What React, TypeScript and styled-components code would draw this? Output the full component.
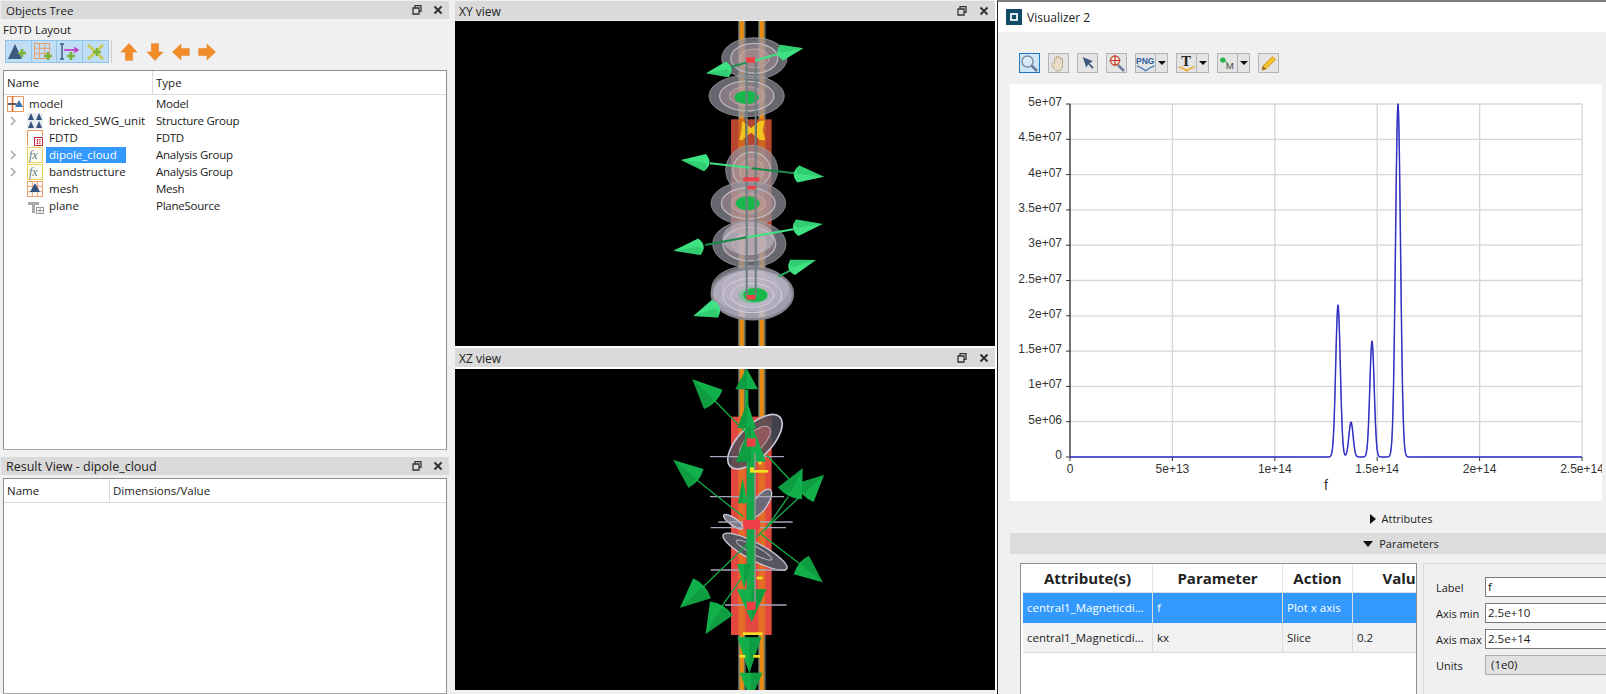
import React from "react";
import styled, { createGlobalStyle } from "styled-components";

const Global = createGlobalStyle`
  html, body { margin: 0; padding: 0; background: #f0f0f0; overflow: hidden; }
  * { box-sizing: border-box; }
`;

const FONT = `"Open Sans", "Noto Sans", sans-serif`;

const Page = styled.div`
  width: 1606px; height: 694px; overflow: hidden; display: flex;
  background: #f0f0f0; font-family: ${FONT}; font-size: 11.5px; color: #1a1a1a;
`;
const LeftColumn = styled.div`
  width: 449px; margin-right: 6px; height: 694px; display: flex; flex-direction: column; flex: none;
`;
const ViewsColumn = styled.div`
  width: 540px; height: 694px; display: flex; flex-direction: column; flex: none;
`;
const TitleBar = styled.div<{ $inset?: boolean; $fs?: number }>`
  height: 18px; margin-top: 1px; flex: none; background: #dadada; display: flex; align-items: center;
  padding: 0 0 0 ${(p) => (p.$inset ? 4 : 5)}px; font-size: ${(p) => p.$fs ?? 12}px; color: #222;
  border-left: ${(p) => (p.$inset ? "0" : "1px solid #ececec")};
`;
const TitleText = styled.span` flex: 1; white-space: nowrap; `;
const TitleButton = styled.span<{ $w: number }>`
  width: ${(p) => p.$w}px; height: 18px; display: flex; align-items: center; justify-content: center; flex: none;
`;
const LayoutLabel = styled.div` height: 21px; padding: 1px 0 0 3px; line-height: 20px; font-size: 11.5px; flex: none; `;
const ToolRow = styled.div` display: flex; align-items: center; height: 23px; padding-left: 5px; flex: none; `;
const ToolGroup = styled.div`
  display: flex; width: 104px; height: 23px; background: #bfddf5; border: 1px solid #92c3ea;
`;
const ToolGroupButton = styled.div`
  width: 26px; display: flex; align-items: center; justify-content: center; border-right: 1px solid #92c3ea;
  &:last-child { border-right: 0; }
`;
const ToolSep = styled.div` width: 1px; height: 23px; background: #cfcfcf; margin: 0 8px 0 2px; `;
const MoveButton = styled.div` width: 26px; display: flex; justify-content: flex-start; `;
const TableBox = styled.div<{ $h?: number; $top: number }>`
  margin: ${(p) => p.$top}px 2px 0 3px; ${(p) => (p.$h ? `height: ${p.$h}px; flex: none;` : "flex: 1;")}
  border: 1px solid #8f8f8f; border-bottom-color: #a8a8a8; background: #fff; overflow: hidden;
`;
const HeadRow = styled.div<{ $first: number }>`
  display: grid; grid-template-columns: ${(p) => p.$first}px 1fr; height: 24px;
  border-bottom: 1px solid #d8d8d8; background: #fff;
`;
const HeadCell = styled.div`
  padding-left: 3px; line-height: 23px; border-right: 1px solid #d8d8d8; font-size: 11.5px;
  &:last-child { border-right: 0; }
`;
const TreeBody = styled.div` padding-top: 0; `;
const TreeRow = styled.div`
  display: grid; grid-template-columns: 148px 1fr; height: 17px; line-height: 17px; font-size: 11.5px;
`;
const NameCell = styled.div<{ $depth: number }>`
  display: flex; align-items: center; padding-left: ${(p) => (p.$depth ? 6 : 3)}px; white-space: nowrap;
`;
const Chevron = styled.span` width: 17px; flex: none; display: flex; align-items: center; `;
const TreeIcon = styled.span` width: 17px; height: 17px; flex: none; margin-right: 5px; display: flex; align-items: center; `;
const TreeLabel = styled.span<{ $sel?: boolean }>`
  margin-left: -3px; padding: 0 3px; height: 16px; line-height: 16px;
  ${(p) => (p.$sel ? "background: #3399ff; color: #fff; width: 80px;" : "")}
`;
const TypeCell = styled.div` padding-left: 4px; letter-spacing: -0.25px; `;
const ViewPort = styled.svg<{ $h: number }>`
  display: block; width: 540px; height: ${(p) => p.$h}px; background: #000; flex: none;
`;
const ViewSpacer = styled.div<{ $h: number; $c?: string }>` height: ${(p) => p.$h}px; flex: none; background: ${(p) => p.$c || "#f0f0f0"}; `;
const ViewsTitle = styled(TitleBar)` margin-top: 0; height: 19px; padding-top: 1px; `;
const Win = styled.div`
  flex: none; width: 609px; height: 694px; margin-left: 2px; border-left: 1px solid #222; border-top: 2px solid #7d7d7d;
  box-shadow: -2px 0 0 #fff; display: flex; flex-direction: column; overflow: hidden; background: #f0f0f0;
`;
const WinTitle = styled.div`
  height: 30px; background: #fff; display: flex; align-items: center; padding-left: 8px; gap: 5px; font-size: 12px; flex: none;
`;
const WinToolbar = styled.div` height: 52px; padding: 21px 0 0 21px; display: flex; gap: 8px; flex: none; `;
const ToolBtn = styled.div<{ $active?: boolean; $w?: number }>`
  width: ${(p) => p.$w ?? 21}px; height: 20px; display: flex; align-items: center; flex: none;
  justify-content: ${(p) => (p.$w ? "flex-start" : "center")};
  background: ${(p) => (p.$active ? "#cfe6f8" : "#e4e4e4")};
  border: 1px solid ${(p) => (p.$active ? "#1e78c4" : "#b4b4b4")};
`;
const Caret = styled.span`
  margin-left: auto; width: 12px; height: 18px; border-left: 1px solid #b4b4b4; display: flex; align-items: center; justify-content: center;
  &::after { content: ""; border-left: 4px solid transparent; border-right: 4px solid transparent; border-top: 4px solid #111; }
`;
const PlotCard = styled.svg`
  display: block; flex: none; margin-left: 12px; width: 592px; height: 417px; background: #fff;
  font-family: "Liberation Sans", sans-serif;
`;
const Section = styled.div<{ $open?: boolean }>`
  flex: none; margin-left: 12px; width: 782px; display: flex; justify-content: center; align-items: center; gap: 6px;
  font-size: 11px; color: #222; height: ${(p) => (p.$open ? 21 : 32)}px;
  ${(p) => (p.$open ? "background: #dcdcdc;" : "padding: 3px 0 0 0;")}
`;
const Triangle = styled.span<{ $open?: boolean }>`
  width: 0; height: 0;
  ${(p) => p.$open
    ? "border-left: 5px solid transparent; border-right: 5px solid transparent; border-top: 6px solid #111;"
    : "border-top: 5px solid transparent; border-bottom: 5px solid transparent; border-left: 6px solid #111;"}
`;
const ParamArea = styled.div` flex: 1; display: flex; padding: 9px 0 0 22px; gap: 6px; min-height: 0; `;
const ParamTable = styled.div`
  width: 397px; flex: none; background: #fff; border: 1px solid #8f8f8f; border-bottom: 0; padding-left: 2px; overflow: hidden;
`;
const GridRow = styled.div<{ $sel?: boolean; $head?: boolean }>`
  display: grid; grid-template-columns: 130px 130px 70px 102px; width: 432px;
  height: ${(p) => (p.$head ? 29 : 30)}px;
  background: ${(p) => (p.$sel ? "#3399ff" : p.$head ? "#fff" : "#f2f2f2")};
  color: ${(p) => (p.$sel ? "#fff" : "#222")};
  border-bottom: ${(p) => (p.$sel ? "0" : "1px solid #dcdcdc")};
`;
const GridCell = styled.div<{ $head?: boolean }>`
  border-right: 1px solid ${(p) => (p.$head ? "#e4e4e4" : "#dcdcdc")};
  padding-left: ${(p) => (p.$head ? 0 : 4)}px; white-space: nowrap; overflow: hidden;
  line-height: ${(p) => (p.$head ? 28 : 29)}px;
  text-align: ${(p) => (p.$head ? "center" : "left")};
  font-size: ${(p) => (p.$head ? 15 : 11.5)}px; font-weight: ${(p) => (p.$head ? 700 : 400)};
`;
const FormPanel = styled.div`
  flex: 1; border: 1px solid #dcdcdc; border-bottom: 0; border-right: 0; padding: 13px 0 0 12px;
  display: flex; flex-direction: column; gap: 6px;
`;
const FormRow = styled.div` display: flex; align-items: center; height: 20px; `;
const FormLabel = styled.span` width: 49px; flex: none; font-size: 11px; `;
const FormInput = styled.div<{ $grey?: boolean }>`
  flex: 1; height: 20px; line-height: 18px; padding-left: ${(p) => (p.$grey ? 5 : 2)}px; font-size: 11.5px;
  border: 1px solid ${(p) => (p.$grey ? "#adadad" : "#7a7a7a")}; border-right: 0;
  background: ${(p) => (p.$grey ? "#e1e1e1" : "#fff")};
`;

/* ---------- small icons ---------- */
const FloatIcon = () => (
  <svg width="10" height="10" viewBox="0 0 10 10"><path d="M3 2.5V.7h6v5.6H7M1 3h6v6H1z" fill="none" stroke="#333" strokeWidth="1.3" /></svg>
);
const CloseIcon = () => (
  <svg width="10" height="10" viewBox="0 0 10 10"><path d="M1.5 1.5l7 7M8.5 1.5l-7 7" stroke="#333" strokeWidth="2" /></svg>
);
const ChevronIcon = () => (
  <svg width="7" height="10" viewBox="0 0 7 10"><path d="M1 1l4 4-4 4" fill="none" stroke="#a3a3a3" strokeWidth="1.4" /></svg>
);
const Plus = ({ x, y }: { x: number; y: number }) => (
  <path d={`M${x - 4} ${y}h8M${x} ${y - 4}v8`} stroke="#7ab33a" strokeWidth="2.6" />
);
const OrangeGrid = ({ s = 16 }: { s?: number }) => (
  <g fill="none" stroke="#e8a070" strokeWidth="1">
    <rect x=".5" y=".5" width={s - 1} height={s - 1} />
    <path d={`M${s / 3} 0v${s}M${(2 * s) / 3} 0v${s}M0 ${s / 3}h${s}M0 ${(2 * s) / 3}h${s}`} />
  </g>
);
const ToolTri = () => (
  <svg width="22" height="19" viewBox="0 0 22 19"><path d="M8 2L15 17H1z" fill="#3c5a80" /><Plus x={15} y={11} /></svg>
);
const ToolGridAdd = () => (
  <svg width="21" height="19" viewBox="0 0 21 19"><g transform="translate(1 1)"><OrangeGrid /></g><Plus x={15} y={14} /></svg>
);
const ToolPort = () => (
  <svg width="21" height="19" viewBox="0 0 21 19"><path d="M3 2v15M1 2h4M1 17h4" stroke="#3c5a80" strokeWidth="1.4" fill="none" /><path d="M5 8h13M15 5.5L19 8l-4 2.5" stroke="#c02fc0" strokeWidth="1.4" fill="none" /><Plus x={12} y={14} /></svg>
);
const ToolCross = () => (
  <svg width="21" height="18" viewBox="0 0 21 18"><path d="M3 2l15 14M18 2L3 16" stroke="#c8cc55" strokeWidth="3" /><Plus x={12} y={9} /></svg>
);
const Arrow = ({ rot }: { rot: number }) => (
  <svg width="18" height="18" viewBox="0 0 18 18">
    <path transform={`rotate(${rot} 9 9)`} d="M9 .5L17 9h-4.4v8.3H5.4V9H1z" fill="#f28c28" stroke="#e07a1a" strokeWidth=".5" />
  </svg>
);
const ModelIcon = () => (
  <svg width="17" height="16" viewBox="0 0 17 16"><rect x=".5" y=".5" width="16" height="15" fill="#fff" stroke="#ea9a60" /><path d="M5.5 0v16M0 8h11" stroke="#e8702a" strokeWidth="1.6" /><path d="M1 8h8" stroke="#2c4a72" strokeWidth="1.4" /><path d="M12 4l4 7H8z" fill="#3c6ea8" /></svg>
);
const GroupIcon = () => (
  <svg width="16" height="16" viewBox="0 0 16 16"><rect width="16" height="16" fill="#e8edf3" /><path fill="#34527c" d="M4 0l3 7H1zM12 0l3 7H9zM4 8l3 7H1zM12 8l3 7H9z" /></svg>
);
const FdtdIcon = () => (
  <svg width="16" height="16" viewBox="0 0 16 16"><path d="M.5 16V.5H15.5V6" fill="none" stroke="#e8965a" /><rect x="7.5" y="7.500" width="8" height="8" fill="#fff" stroke="#c8283a" /><path d="M9.5 10h4M9.5 13h4M10.5 9v6M13 9v6" stroke="#c8283a" strokeWidth="1" strokeDasharray="1.2 .8" /></svg>
);
const FxIcon = () => (
  <svg width="16" height="16" viewBox="0 0 16 16">
    <rect x=".5" y=".5" width="15" height="15" fill="#fffdf0" stroke="#e4d25a" />
    <text x="2" y="12" fontFamily="Liberation Serif" fontStyle="italic" fontSize="12" fill="#5a7a8a">fx</text>
  </svg>
);
const MeshIcon = () => (
  <svg width="16" height="16" viewBox="0 0 16 16"><OrangeGrid /><path d="M8 2l5 9H3z" fill="#34527c" /></svg>
);
const PlaneIcon = () => (
  <svg width="17" height="16" viewBox="0 0 17 16"><path d="M1 4h11v3H8v8H5V7H1z" fill="#a8a8a8" /><rect x="9.5" y="9.5" width="7" height="6" fill="#fff" stroke="#9a9a9a" /><path d="M13 9.5v6M9.5 12.5h7" stroke="#9a9a9a" /></svg>
);

const Lens = ({ target }: { target?: boolean }) => (
  <svg width="19" height="18" viewBox="0 0 19 18">
    <path d="M11 11l6 6" stroke="#6a8098" strokeWidth="2.6" />
    <circle cx={target ? 8 : 7.5} cy={target ? 6.5 : 7.5} r={target ? 4.5 : 5.5} fill={target ? "#f2e6e0" : "#dbe9f6"} stroke={target ? "#c8543c" : "#7a8ea4"} strokeWidth="1.4" />
    {target && <path d="M8 1v11M2.500 6.500h11" stroke="#c8342c" strokeWidth="1.2" />}
  </svg>
);
const HandIcon = () => (
  <svg width="17" height="18" viewBox="0 0 17 18"><path d="M4.5 9V4.5a1 1 0 012 0V3a1 1 0 012 0v1a1 1 0 012 0v1.5a1 1 0 012 0V12c0 3-2 5-4.5 5-2.2 0-3.2-1-4.5-3L2 10.500c-.7-1.100.8-2 1.600-1z" fill="#e8dcc8" stroke="#bba98e" /></svg>
);
const PointerIcon = () => (
  <svg width="14" height="14" viewBox="0 0 16 16"><path d="M2 1l4 12 2.300-3.500L13 14.500l1.500-1.500-4.800-4.800L13.500 6z" fill="#3f5a80" /></svg>
);
const PngIcon = () => (
  <svg width="20" height="18" viewBox="0 0 20 18">
    <text x="0" y="10" fontFamily="Liberation Sans" fontWeight="700" fontSize="9.500" textLength="19" lengthAdjust="spacingAndGlyphs" fill="#2f5f9c">PNG</text>
    <path d="M1 12c3 1 5 2 9 5 4-3 6-4 9-5" fill="none" stroke="#3f78b8" strokeWidth="1.500" />
  </svg>
);
const TextIcon = () => (
  <svg width="20" height="18" viewBox="0 0 20 18">
    <text x="4.500" y="12.500" fontFamily="Liberation Serif" fontWeight="700" fontSize="15" fill="#222">T</text>
    <path d="M2 13c3 1 5 1.500 8 4 3-2.500 5-3 8-4" fill="none" stroke="#f0b040" strokeWidth="2" />
  </svg>
);
const MarkerIcon = () => (
  <svg width="20" height="18" viewBox="0 0 20 18">
    <circle cx="5" cy="6" r="2.800" fill="#26b34a" /><path d="M5 6l5 3" stroke="#26b34a" />
    <text x="8" y="15" fontFamily="Liberation Sans" fontSize="10" fill="#444">M</text>
  </svg>
);
const PencilIcon = () => (
  <svg width="18" height="18" viewBox="0 0 18 18"><path d="M3 12L12.500 2.500l3 3L6 15l-4 1z" fill="#f2c230" stroke="#d89a20" /><path d="M2 16l1-4 3 3z" fill="#8a6a30" /></svg>
);
const Logo = () => (
  <svg width="16" height="16" viewBox="0 0 16 16"><rect width="16" height="16" fill="#0f4a66" /><rect x="4" y="4" width="8" height="8" fill="#dfe8ee" /><rect x="6" y="6" width="4" height="4" fill="#0f4a66" /></svg>
);

/* ---------- 3D view drawing, in reference zoom units ---------- */
type Pt = [number, number];
const Cone = ({ tip, base, hw, fill, shade, bulge = 0.7 }: { tip: Pt; base: Pt; hw: number; fill: string; shade: string; bulge?: number }) => {
  const dx = base[0] - tip[0], dy = base[1] - tip[1];
  const len = Math.hypot(dx, dy);
  const ux = dx / len, uy = dy / len;
  const a: Pt = [base[0] - uy * hw, base[1] + ux * hw];
  const b: Pt = [base[0] + uy * hw, base[1] - ux * hw];
  const c: Pt = [base[0] + ux * hw * bulge * 1.5, base[1] + uy * hw * bulge * 1.5];
  return (
    <g>
      <path d={`M${tip[0]} ${tip[1]}L${a[0]} ${a[1]}Q${c[0]} ${c[1]} ${b[0]} ${b[1]}Z`} fill={fill} />
      <path d={`M${tip[0]} ${tip[1]}L${a[0]} ${a[1]}Q${(a[0] + c[0]) / 2} ${(a[1] + c[1]) / 2} ${base[0]} ${base[1]}Z`} fill={shade} opacity=".5" />
    </g>
  );
};
const Rails = () => (
  <g>
    {[295, 355].map((x) => (
      <g key={x}>
        <rect x={x} y="0" width="21" height="1100" fill="#8d8a6c" />
        <rect x={x + 5} y="0" width="11" height="1100" fill="#e88a12" />
        <rect x={x + 17} y="0" width="4" height="1100" fill="#6e6e5c" />
      </g>
    ))}
  </g>
);
const Lobe = ({ cx, cy, rx, ry }: { cx: number; cy: number; rx: number; ry: number }) => (
  <g>
    <ellipse cx={cx} cy={cy} rx={rx} ry={ry} fill="#8f8f9a" fillOpacity=".72" stroke="#aaa6ae" strokeWidth="2" />
    <ellipse cx={cx} cy={cy} rx={rx * 0.72} ry={ry * 0.72} fill="#c4a4a4" fillOpacity=".32" stroke="#bdb6bc" strokeWidth="4" />
    <ellipse cx={cx} cy={cy} rx={rx * 0.46} ry={ry * 0.46} fill="#cfa0a0" fillOpacity=".3" stroke="#bfb0b4" strokeWidth="2.500" />
  </g>
);
const XYScene = () => {
  const L = { fill: "#3fe283", shade: "#22b860" };
  const seg = (d: string, c: string, w = 6) => <path d={d} stroke={c} strokeWidth={w} fill="none" />;
  return (
    <ViewPort $h={325} viewBox="-555 3 1620 975" preserveAspectRatio="none">
      <Rails />
      <rect x="273" y="298" width="122" height="342" fill="#b8452f" />
      <rect x="295" y="298" width="21" height="342" fill="#e88a12" opacity=".5" />
      <rect x="355" y="298" width="21" height="342" fill="#e88a12" opacity=".5" />
      <path d="M306 302l27 22 27-22 14 0-6 30 8 28-16 0-27-22-27 22-8 0 6-28z" fill="#f2c420" />
      <rect x="316" y="300" width="4" height="85" fill="#111" opacity=".6" />
      <rect x="347" y="300" width="4" height="85" fill="#111" opacity=".6" />
      <Lobe cx={343} cy={115} rx={98} ry={62} />
      <Lobe cx={320} cy={228} rx={113} ry={62} />
      <ellipse cx="320" cy="232" rx="36" ry="20" fill="#16b84c" />
      <Lobe cx={335} cy={450} rx={78} ry={74} />
      <Lobe cx={325} cy={550} rx={112} ry={65} />
      <ellipse cx="323" cy="550" rx="36" ry="21" fill="#16b84c" />
      <Lobe cx={328} cy={672} rx={110} ry={70} />
      <ellipse cx="325" cy="655" rx="78" ry="50" fill="#c4c0cc" fillOpacity=".55" />
      <Lobe cx={330} cy={805} rx={115} ry={68} />
      <ellipse cx="337" cy="822" rx="122" ry="76" fill="#bdb9ca" fillOpacity=".85" stroke="#85858f" strokeWidth="7" />
      <ellipse cx="337" cy="826" rx="88" ry="52" fill="none" stroke="#d6d2dc" strokeWidth="3" />
      <ellipse cx="337" cy="826" rx="64" ry="36" fill="none" stroke="#d6d2dc" strokeWidth="3" />
      <ellipse cx="340" cy="826" rx="45" ry="24" fill="#5ec88a" fillOpacity=".6" />
      <ellipse cx="346" cy="825" rx="36" ry="21" fill="#16b84c" />
      {seg("M320 125V830", "#6f7f7f", 6)}
      {seg("M347 125V830", "#6f7f7f", 6)}
      <rect x="318" y="112" width="27" height="16" fill="#ee3f46" />
      <rect x="310" y="472" width="48" height="12" fill="#ee3f46" />
      <rect x="322" y="498" width="26" height="10" fill="#ee3f46" />
      <rect x="320" y="825" width="26" height="14" fill="#ee3f46" />
      {seg("M345 122L420 100", "#3fe283")}
      {seg("M320 127L270 142", "#1d8f4a")}
      {seg("M210 430L330 443", "#3fe283")}
      {seg("M335 445L465 460", "#188a48")}
      {seg("M320 652L460 628", "#3fe283")}
      {seg("M195 675L320 652", "#188a48")}
      {seg("M415 770L450 752", "#2aaa5c")}
      <Cone tip={[490, 85]} base={[425, 98]} hw={24} {...L} />
      <Cone tip={[198, 160]} base={[262, 148]} hw={24} {...L} />
      <Cone tip={[123, 420]} base={[195, 428]} hw={26} {...L} />
      <Cone tip={[552, 470]} base={[475, 462]} hw={26} {...L} />
      <Cone tip={[548, 612]} base={[472, 623]} hw={25} {...L} />
      <Cone tip={[100, 692]} base={[178, 680]} hw={25} {...L} />
      <Cone tip={[528, 720]} base={[458, 742]} hw={24} {...L} />
      <Cone tip={[160, 888]} base={[225, 866]} hw={28} {...L} />
    </ViewPort>
  );
};
const XZScene = () => {
  const D = { fill: "#12b04a", shade: "#0c8a3a" };
  const shaft = (d: string, w = 4) => <path d={d} stroke="#14a84a" strokeWidth={w} fill="none" />;
  const grey = (y: number, a: number, b: number) => <path key={y} d={`M${a} ${y}H${b}`} stroke="#a6a6bc" strokeWidth="4" />;
  const yellow = (x: number, y: number, w: number) => <rect key={`${x}-${y}`} x={x} y={y} width={w} height="8" fill="#f4e020" />;
  return (
    <ViewPort $h={321} viewBox="-555 87 1620 963" preserveAspectRatio="none">
      <Rails />
      <rect x="273" y="230" width="122" height="655" fill="#e2483f" />
      <rect x="295" y="230" width="21" height="655" fill="#e88a12" opacity=".55" />
      <rect x="355" y="230" width="21" height="655" fill="#e88a12" opacity=".55" />
      <g transform="rotate(-45 345 305)">
        <ellipse cx="345" cy="305" rx="105" ry="48" fill="#4d4d58" fillOpacity=".85" stroke="#c9c9d9" strokeWidth="5" />
        <ellipse cx="345" cy="305" rx="60" ry="26" fill="#9a5a5a" fillOpacity=".8" stroke="#b8a8b0" strokeWidth="3" />
      </g>
      <g transform="rotate(-55 362 490)"><ellipse cx="362" cy="490" rx="50" ry="20" fill="#6a6a76" stroke="#c9c9d9" strokeWidth="4" /></g>
      <g transform="rotate(35 280 545)"><ellipse cx="280" cy="545" rx="35" ry="11" fill="#7a7a88" stroke="#c9c9d9" strokeWidth="4" /></g>
      <g transform="rotate(28 345 635)">
        <ellipse cx="345" cy="635" rx="108" ry="26" fill="#56565f" stroke="#c9c9d9" strokeWidth="4" />
        <ellipse cx="340" cy="632" rx="60" ry="12" fill="none" stroke="#b8b8c8" strokeWidth="3" />
      </g>
      {grey(350, 210, 432)}{grey(470, 210, 432)}{grey(546, 235, 458)}{grey(563, 212, 438)}{grey(690, 212, 438)}{grey(795, 255, 440)}
      {shaft("M222 180L320 280")}{shaft("M170 420L310 530")}{shaft("M380 345L450 420")}{shaft("M360 580L480 672")}
      {shaft("M190 740L345 590")}{shaft("M245 800L335 670")}{shaft("M350 590L480 470")}{shaft("M375 570L445 470")}
      <path d="M320 150V360" stroke="#14a84a" strokeWidth="10" />
      <rect x="320" y="315" width="24" height="470" fill="#14a84a" />
      <Cone tip={[320, 85]} base={[320, 148]} hw={34} bulge={0} {...D} />
      <Cone tip={[322, 185]} base={[320, 265]} hw={28} bulge={0} {...D} />
      <Cone tip={[333, 250]} base={[333, 365]} hw={45} bulge={0} {...D} />
      <Cone tip={[308, 415]} base={[308, 490]} hw={14} bulge={0} {...D} />
      <Cone tip={[157, 118]} base={[220, 178]} hw={40} bulge={.3} {...D} />
      <Cone tip={[100, 360]} base={[168, 415]} hw={36} bulge={.3} {...D} />
      <Cone tip={[552, 405]} base={[495, 458]} hw={38} bulge={.3} {...D} />
      <Cone tip={[488, 385]} base={[450, 460]} hw={40} bulge={.3} {...D} />
      <Cone tip={[548, 727]} base={[484, 675]} hw={36} bulge={.3} {...D} />
      <Cone tip={[120, 803]} base={[186, 745]} hw={40} bulge={.3} {...D} />
      <Cone tip={[197, 882]} base={[244, 805]} hw={40} bulge={.3} {...D} />
      <Cone tip={[312, 745]} base={[312, 672]} hw={20} bulge={0} {...D} />
      <Cone tip={[335, 845]} base={[335, 748]} hw={44} bulge={0} {...D} />
      <Cone tip={[328, 1000]} base={[328, 892]} hw={36} bulge={0} {...D} />
      <Cone tip={[333, 1080]} base={[333, 998]} hw={34} bulge={0} {...D} />
      <path d="M345 340V790" stroke="#7f9a8a" strokeWidth="5" />
      <rect x="320" y="295" width="27" height="25" fill="#ee3f46" />
      <rect x="310" y="540" width="50" height="28" fill="#ee3f46" />
      <rect x="320" y="785" width="27" height="25" fill="#ee3f46" />
      {yellow(330, 390, 55)}{yellow(350, 710, 18)}{yellow(308, 877, 60)}{yellow(298, 945, 18)}{yellow(340, 945, 20)}
      {yellow(355, 365, 10)}{yellow(330, 382, 12)}
    </ViewPort>
  );
};

/* ---------- plot ---------- */
const X0 = 1070, XS = 102.4, YB = 457, YT = 104;
const peaks = [
  { c: 1338, h: 152, s: 2.3 },
  { c: 1351, h: 35, s: 2.1 },
  { c: 1372, h: 116, s: 2.2 },
  { c: 1398, h: 353, s: 2.5 },
];
const curve = (() => {
  let d = `M${X0} ${YB}`;
  for (let x = 1300; x <= 1420; x += 0.5) {
    const v = peaks.reduce((a, p) => a + p.h * Math.exp(-((x - p.c) ** 2) / (2 * p.s * p.s)), 0);
    d += `L${x} ${(YB - v).toFixed(2)}`;
  }
  return d + `L1582 ${YB}`;
})();
const yLabels = ["0", "5e+06", "1e+07", "1.5e+07", "2e+07", "2.5e+07", "3e+07", "3.5e+07", "4e+07", "4.5e+07", "5e+07"];
const xLabels = ["0", "5e+13", "1e+14", "1.5e+14", "2e+14", "2.5e+14"];
const Plot = () => (
  <PlotCard viewBox="1010 84 592 417">
    {yLabels.map((_, i) => i > 0 && (
      <path key={i} d={`M${X0} ${YB - i * 35.3}H1582`} stroke="#d6d6d6" strokeWidth="1.300" />
    ))}
    {xLabels.map((_, i) => i > 0 && (
      <path key={i} d={`M${X0 + i * XS} ${YT}V${YB}`} stroke="#d6d6d6" strokeWidth="1.300" />
    ))}
    <path d={`M${X0} ${YT}V${YB}`} stroke="#14141e" strokeWidth="1.200" />
    {yLabels.map((t, i) => (
      <g key={t}>
        <path d={`M1066 ${YB - i * 35.3}H${X0}`} stroke="#333" />
        <text x="1062" y={YB - i * 35.3 + 2} textAnchor="end" fontSize="12" fill="#333">{t}</text>
      </g>
    ))}
    {xLabels.map((t, i) => (
      <g key={t}>
        <path d={`M${X0 + i * XS} ${YB}v4`} stroke="#333" />
        <text x={X0 + i * XS} y="473" textAnchor="middle" fontSize="12" fill="#333">{t}</text>
      </g>
    ))}
    <path d={curve} fill="none" stroke="#4a4ae0" strokeWidth="1.500" strokeLinejoin="round" />
    <path d={curve} fill="none" stroke="#1c1c98" strokeWidth=".6" />
    <text x="1326" y="490" textAnchor="middle" fontSize="14" fill="#333">f</text>
  </PlotCard>
);

const Dock = ({ title, closeW = 22, inset, fs }: { title: string; closeW?: number; inset?: boolean; fs?: number }) => {
  const Bar = inset ? ViewsTitle : TitleBar;
  return (
    <Bar $inset={inset} $fs={fs}>
      <TitleText>{title}</TitleText>
      <TitleButton $w={21}><FloatIcon /></TitleButton>
      <TitleButton $w={closeW}><CloseIcon /></TitleButton>
    </Bar>
  );
};

const tree = [
  { name: "model", type: "Model", depth: 0, Icon: ModelIcon },
  { name: "bricked_SWG_unit", type: "Structure Group", depth: 1, kids: true, Icon: GroupIcon },
  { name: "FDTD", type: "FDTD", depth: 1, Icon: FdtdIcon },
  { name: "dipole_cloud", type: "Analysis Group", depth: 1, kids: true, sel: true, Icon: FxIcon },
  { name: "bandstructure", type: "Analysis Group", depth: 1, kids: true, Icon: FxIcon },
  { name: "mesh", type: "Mesh", depth: 1, Icon: MeshIcon },
  { name: "plane", type: "PlaneSource", depth: 1, Icon: PlaneIcon },
];

export default function App() {
  return (
    <Page>
      <Global />
      <LeftColumn>
        <Dock title="Objects Tree" fs={11.5} />
        <LayoutLabel>FDTD Layout</LayoutLabel>
        <ToolRow>
          <ToolGroup>
            <ToolGroupButton><ToolTri /></ToolGroupButton>
            <ToolGroupButton><ToolGridAdd /></ToolGroupButton>
            <ToolGroupButton><ToolPort /></ToolGroupButton>
            <ToolGroupButton><ToolCross /></ToolGroupButton>
          </ToolGroup>
          <ToolSep />
          <MoveButton><Arrow rot={0} /></MoveButton>
          <MoveButton><Arrow rot={180} /></MoveButton>
          <MoveButton><Arrow rot={270} /></MoveButton>
          <MoveButton><Arrow rot={90} /></MoveButton>
        </ToolRow>
        <TableBox $top={7} $h={380}>
          <HeadRow $first={149}><HeadCell>Name</HeadCell><HeadCell>Type</HeadCell></HeadRow>
          <TreeBody>
            {tree.map((r) => (
              <TreeRow key={r.name}>
                <NameCell $depth={r.depth}>
                  {r.depth > 0 && <Chevron>{r.kids && <ChevronIcon />}</Chevron>}
                  <TreeIcon><r.Icon /></TreeIcon>
                  <TreeLabel $sel={r.sel}>{r.name}</TreeLabel>
                </NameCell>
                <TypeCell>{r.type}</TypeCell>
              </TreeRow>
            ))}
          </TreeBody>
        </TableBox>
        <ViewSpacer $h={6} />
        <Dock title="Result View - dipole_cloud" fs={12.5} />
        <TableBox $top={3}>
          <HeadRow $first={106}><HeadCell>Name</HeadCell><HeadCell>Dimensions/Value</HeadCell></HeadRow>
        </TableBox>
      </LeftColumn>

      <ViewsColumn>
        <ViewSpacer $h={1} />
        <Dock title="XY view" inset closeW={23} />
        <ViewSpacer $h={1} />
        <XYScene />
        <ViewSpacer $h={2} $c="#fff" />
        <Dock title="XZ view" inset closeW={23} />
        <ViewSpacer $h={2} $c="#fff" />
        <XZScene />
      </ViewsColumn>

      <Win>
        <WinTitle><Logo />Visualizer 2</WinTitle>
        <WinToolbar>
          <ToolBtn $active><Lens /></ToolBtn>
          <ToolBtn><HandIcon /></ToolBtn>
          <ToolBtn><PointerIcon /></ToolBtn>
          <ToolBtn><Lens target /></ToolBtn>
          <ToolBtn $w={33}><PngIcon /><Caret /></ToolBtn>
          <ToolBtn $w={33}><TextIcon /><Caret /></ToolBtn>
          <ToolBtn $w={33}><MarkerIcon /><Caret /></ToolBtn>
          <ToolBtn><PencilIcon /></ToolBtn>
        </WinToolbar>
        <Plot />
        <Section><Triangle />Attributes</Section>
        <Section $open><Triangle $open />Parameters</Section>
        <ParamArea>
          <ParamTable>
            <GridRow $head>
              <GridCell $head>Attribute(s)</GridCell><GridCell $head>Parameter</GridCell>
              <GridCell $head>Action</GridCell><GridCell $head>Value</GridCell>
            </GridRow>
            <GridRow $sel>
              <GridCell>central1_Magneticdi...</GridCell><GridCell>f</GridCell>
              <GridCell>Plot x axis</GridCell><GridCell />
            </GridRow>
            <GridRow>
              <GridCell>central1_Magneticdi...</GridCell><GridCell>kx</GridCell>
              <GridCell>Slice</GridCell><GridCell>0.2</GridCell>
            </GridRow>
          </ParamTable>
          <FormPanel>
            <FormRow><FormLabel>Label</FormLabel><FormInput>f</FormInput></FormRow>
            <FormRow><FormLabel>Axis min</FormLabel><FormInput>2.5e+10</FormInput></FormRow>
            <FormRow><FormLabel>Axis max</FormLabel><FormInput>2.5e+14</FormInput></FormRow>
            <FormRow><FormLabel>Units</FormLabel><FormInput $grey>(1e0)</FormInput></FormRow>
          </FormPanel>
        </ParamArea>
      </Win>
    </Page>
  );
}
